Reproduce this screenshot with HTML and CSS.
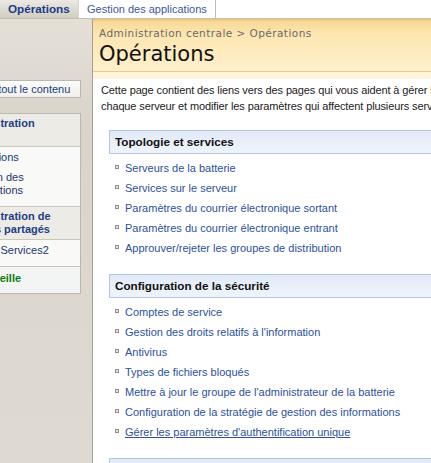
FILE: index.html
```html
<!DOCTYPE html>
<html lang="fr">
<head>
<meta charset="utf-8">
<title>Opérations</title>
<link rel="stylesheet" href="styles.css">
</head>
<body>
<div class="page">
  <div class="topnav">
    <a class="tab tab-selected">Opérations</a>
    <a class="tab tab-plain">Gestion des applications</a>
  </div>
  <div class="main">
    <nav class="leftnav">
      <div class="navbox viewall"><a>Afficher tout le contenu</a></div>
      <div class="navbox">
        <div class="navhead">Administration centrale</div>
        <ul class="navitems">
          <li>Opérations</li>
          <li>Gestion des applications</li>
        </ul>
        <div class="navhead sep">Administration de services partagés</div>
        <ul class="navitems">
          <li>SharedServices2</li>
        </ul>
        <div class="navhead sep recycle">
          <svg class="bin" width="16" height="16" viewBox="0 0 16 16"><path d="M4 4h8l-1 10H5z" fill="#9ab8d8" stroke="#3a6a9a"/><path d="M3 3h10" stroke="#3a6a9a"/></svg><span>Corbeille</span>
        </div>
      </div>
    </nav>
    <div class="content">
      <div class="titlearea">
        <div class="breadcrumb">Administration centrale &gt; Opérations</div>
        <h1>Opérations</h1>
      </div>
      <div class="titlebottom"></div>
      <p class="intro">Cette page contient des liens vers des pages qui vous aident à gérer les serveurs de votre batterie, les services exécutés sur<br>chaque serveur et modifier les paramètres qui affectent plusieurs serveurs ou applications.</p>

      <section class="section">
        <div class="section-head">Topologie et services</div>
        <ul class="links">
          <li><a>Serveurs de la batterie</a></li>
          <li><a>Services sur le serveur</a></li>
          <li><a>Paramètres du courrier électronique sortant</a></li>
          <li><a>Paramètres du courrier électronique entrant</a></li>
          <li><a>Approuver/rejeter les groupes de distribution</a></li>
        </ul>
      </section>

      <section class="section">
        <div class="section-head">Configuration de la sécurité</div>
        <ul class="links">
          <li><a>Comptes de service</a></li>
          <li><a>Gestion des droits relatifs à l'information</a></li>
          <li><a>Antivirus</a></li>
          <li><a>Types de fichiers bloqués</a></li>
          <li><a>Mettre à jour le groupe de l'administrateur de la batterie</a></li>
          <li><a>Configuration de la stratégie de gestion des informations</a></li>
          <li><a class="hovered">Gérer les paramètres d'authentification unique</a></li>
        </ul>
      </section>

      <section class="section">
        <div class="section-head">Configuration globale</div>
        <ul class="links">
          <li><a>Travaux du minuteur</a></li>
        </ul>
      </section>
    </div>
  </div>
</div>
</body>
</html>
```

FILE: styles.css
```css
html, body {
  margin: 0;
  padding: 0;
  overflow: hidden;
}

body {
  width: 431px;
  height: 463px;
  font-family: "Liberation Sans", Arial, sans-serif;
  font-size: 11px;
  color: #222;
  background: #fff;
}

.page {
  width: 760px;
}

/* top tabs */
.topnav {
  display: flex;
  height: 18px;
  border-bottom: 1px solid #c4bfb3;
  background: #fff;
}

.tab {
  display: flex;
  align-items: center;
  line-height: 18px;
  white-space: nowrap;
  text-decoration: none;
}

.tab-selected {
  width: 78px;
  box-sizing: border-box;
  padding-left: 8px;
  font-weight: bold;
  font-size: 11.7px;
  color: #1b3a88;
  background: linear-gradient(#ebe9e3, #d2cdc1);
}

.tab-plain {
  padding: 0 8px;
  border-left: 1px solid #d6d6d6;
  border-right: 1px solid #bdbdbd;
  color: #3b5a9a;
  background: #fff;
}

/* main */
.main {
  display: flex;
}

.leftnav {
  flex: none;
  width: 93px;
  height: 444px;
  box-sizing: border-box;
  padding-top: 61px;
  border-right: 1px solid #a3a097;
  background: linear-gradient(#e4e0d8, #d9d4ca 25%, #dcd8d0 60%, #dedad3);
  overflow: hidden;
}

.navbox {
  margin-left: -50px;
  width: 131px;
  box-sizing: border-box;
  border: 1px solid #b9b7b0;
  background: #f8f8f6;
}

.viewall {
  padding: 0 6px 0 7px;
  line-height: 16px;
  margin-bottom: 15px;
  color: #233d7c;
  background: linear-gradient(#fbfbfa, #f1f0ec);
}

.navhead {
  padding: 3px 6px;
  line-height: 13px;
  font-weight: bold;
  color: #1f3d85;
  background: #ecebe6;
}

.navhead.sep {
  border-top: 1px solid #c9c7c0;
}

.navitems {
  list-style: none;
  margin: 0;
  padding: 0 6px 6px 14px;
  border-top: 1px solid #c9c7c0;
  color: #24386e;
  background: #f9f9f7;
}

.navitems li {
  padding: 3.5px 0;
  line-height: 13px;
}

.recycle {
  display: flex;
  align-items: center;
  padding: 3px 6px 7px;
  line-height: 16px;
  color: #0a7d0a;
  background: #f3f5f5;
}

.bin {
  flex: none;
  margin-right: 1px;
}

/* content */
.content {
  flex: none;
  width: 667px;
}

.titlearea {
  padding: 7px 6px 4px;
  border-bottom: 1px dotted #e6cc8c;
  background: linear-gradient(#ecc374 0, #f8da97 3px, #fde6b1 30%, #fff0cc 100%);
}

.titlebottom {
  height: 7px;
  background: #fff5dd;
}

.breadcrumb {
  font-family: "DejaVu Sans", Verdana, sans-serif;
  font-size: 10.5px;
  letter-spacing: 0.45px;
  line-height: 14px;
  color: #6a6a6a;
}

h1 {
  margin: 1px 0 0;
  font-family: "DejaVu Sans", Verdana, sans-serif;
  font-weight: normal;
  font-size: 21px;
  line-height: 26px;
  color: #111;
}

.intro {
  margin: 3px 0 0;
  padding-left: 8px;
  line-height: 16px;
  letter-spacing: -0.12px;
  white-space: nowrap;
}

.section {
  margin: 16px 0 0 16px;
}

.section-head {
  padding: 4px 5px;
  line-height: 14px;
  border: 1px solid #b2c6e6;
  background: linear-gradient(#e2eaf8, #eff4fb);
  font-weight: bold;
  font-size: 11.7px;
  color: #111;
}

.links {
  list-style: none;
  margin: 0;
  padding: 4px 0 0 6px;
}

.links li {
  display: flex;
  align-items: center;
  line-height: 20px;
}

.links li::before {
  content: "";
  flex: none;
  width: 2px;
  height: 2px;
  margin: 0 6px 2px 0;
  border: 1px solid #8f8f8f;
  background: #e6e6e6;
}

.links a {
  color: #2d519b;
  text-decoration: none;
  white-space: nowrap;
}

.links a.hovered {
  text-decoration: underline;
}
```
